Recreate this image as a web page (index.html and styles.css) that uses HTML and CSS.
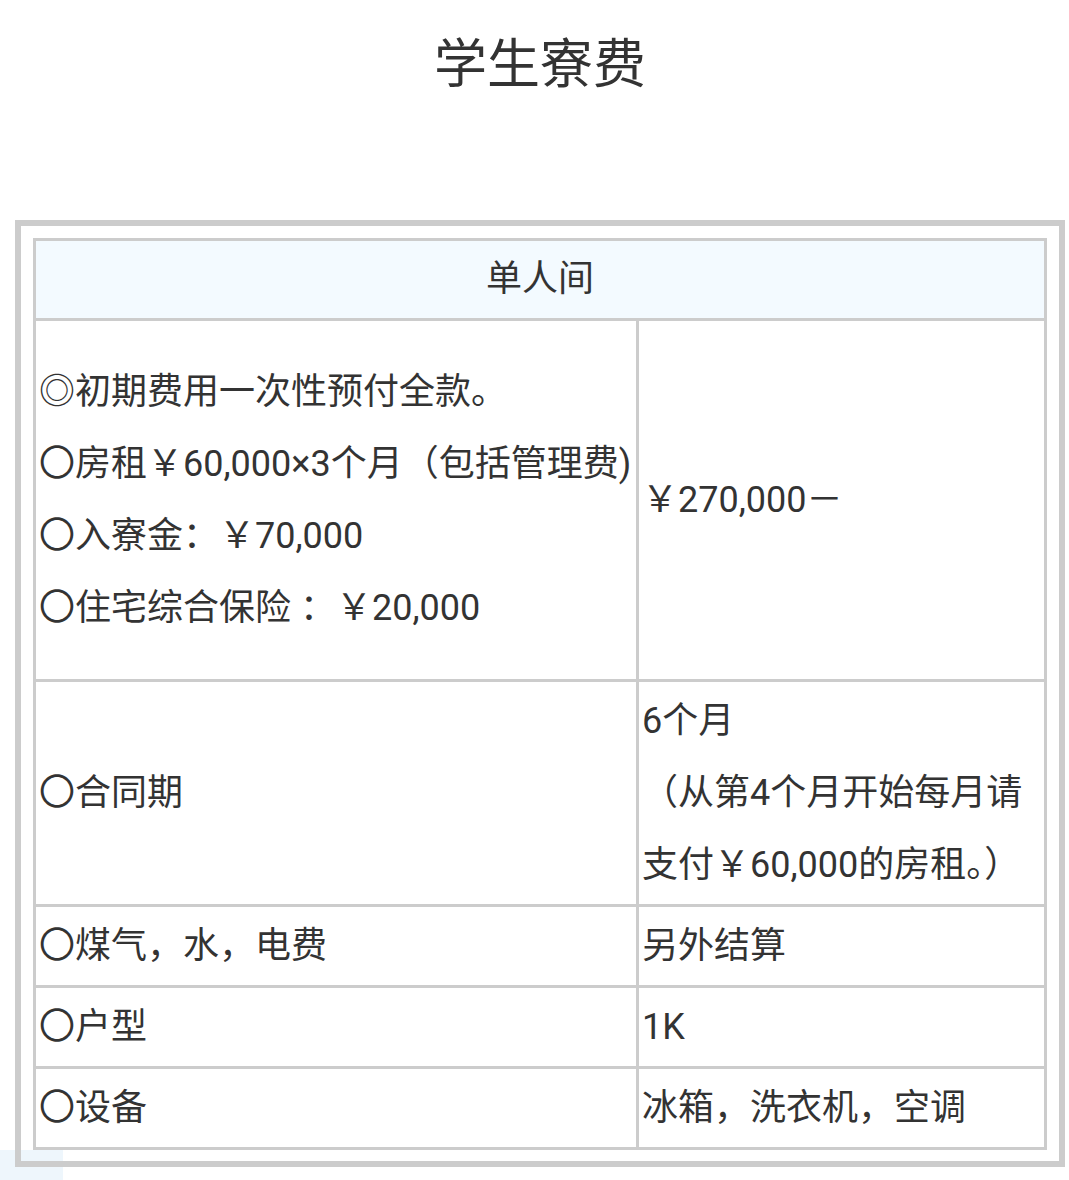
FILE: index.html
```html
<!DOCTYPE html>
<html lang="zh-CN">
<head>
<meta charset="utf-8">
<title>学生寮费</title>
<link rel="stylesheet" href="styles.css">
</head>
<body>
<h1 class="title">学生寮费</h1>
<div class="box">
  <div class="tbl">
    <div class="cell head">单人间</div>
    <div class="cell tall">
      <div>◎初期费用一次性预付全款。</div>
      <div>〇房租￥60,000×3个月（包括管理费)</div>
      <div>〇入寮金：￥70,000</div>
      <div>〇住宅综合保险 ：￥20,000</div>
    </div>
    <div class="cell">￥270,000－</div>
    <div class="cell">〇合同期</div>
    <div class="cell">
      <div>6个月</div>
      <div>（从第4个月开始每月请</div>
      <div>支付￥60,000的房租。）</div>
    </div>
    <div class="cell">〇煤气，水，电费</div>
    <div class="cell">另外结算</div>
    <div class="cell">〇户型</div>
    <div class="cell">1K</div>
    <div class="cell">〇设备</div>
    <div class="cell">冰箱，洗衣机，空调</div>
  </div>
</div>
<div class="corner"></div>
</body>
</html>
```

FILE: styles.css
```css
html {
  background: #fff;
}
html, body {
  margin: 0;
  padding: 0;
}
body {
  font-family: Roboto, "Noto Sans CJK SC", sans-serif;
  color: #333;
  position: relative;
  min-height: 1180px;
  overflow: hidden;
}
.title {
  margin: 0 0 100px;
  width: 1080px;
  height: 120px;
  line-height: 120px;
  text-align: center;
  font-family: "Noto Sans CJK SC", sans-serif;
  font-size: 53px;
  font-weight: 400;
  color: #333;
}
.box {
  margin-left: 15px;
  width: 1050px;
  box-sizing: border-box;
  border: 6px solid #ccc;
  padding: 12px 12px 11px;
}
.tbl {
  display: grid;
  grid-template-columns: 603px 1fr;
  border-top: 3px solid #ccc;
  border-left: 3px solid #ccc;
  font-size: 36px;
  line-height: 72px;
}
.cell {
  border-right: 3px solid #ccc;
  border-bottom: 3px solid #ccc;
  padding: 3px 3px;
  display: flex;
  flex-direction: column;
  justify-content: center;
  white-space: nowrap;
}
.head {
  grid-column: 1 / span 2;
  background: #f3faff;
  text-align: center;
  align-items: center;
  padding: 2px 3px 3px;
}
.tall {
  padding: 35px 3px;
}
.corner {
  position: absolute;
  left: 0;
  top: 1150px;
  width: 63px;
  height: 40px;
  background: #eef6fc;
  z-index: -1;
}
```
